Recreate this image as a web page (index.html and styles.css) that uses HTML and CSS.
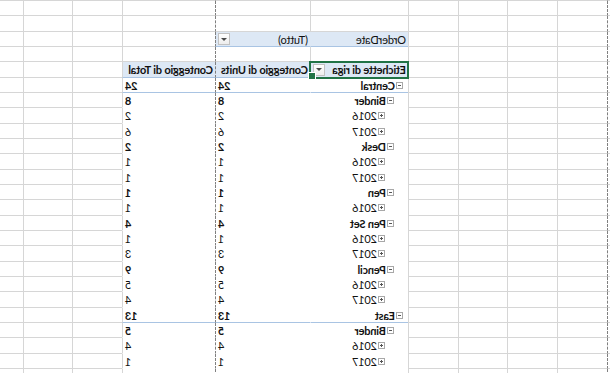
FILE: index.html
```html
<!DOCTYPE html>
<html lang="it">

<head>
    <meta charset="UTF-8">
    <meta name="viewport" content="width=device-width, initial-scale=1.0">
    <title>Tabella pivot - Vendite</title>
    <link rel="stylesheet" href="styles.css">
</head>

<body>
    <div class="sheet">
        <!-- bordo superiore del foglio -->
        <div class="row"><span class="pb"></span><span></span><span></span><span></span><span></span><span></span><span class="pb"></span><span></span><span></span><span></span><span></span></div>
        <div class="row"><span class="pb"></span><span></span><span></span><span></span><span></span><span></span><span class="pb"></span><span></span><span></span><span></span><span></span></div>
        <div class="row"><span class="pb"></span><span></span><span></span><span></span><span></span><span></span><span class="pb"></span><span></span><span></span><span></span><span></span></div>

        <!-- filtro -->
        <div class="row">
            <span class="pb"></span><span></span><span></span><span></span><span></span>
            <span class="flt lbl">OrderDate</span>
            <span class="flt pb">(Tutto)<i class="dd"></i></span>
            <span></span><span></span><span></span><span></span>
        </div>

        <div class="row"><span class="pb"></span><span></span><span></span><span></span><span></span><span></span><span class="pb"></span><span></span><span></span><span></span><span></span></div>

        <!-- intestazione pivot -->
        <div class="row head">
            <span class="pb"></span><span></span><span></span><span></span><span></span>
            <span class="pv lbl sel">Etichette di riga<i class="dd"></i></span>
            <span class="pv pb">Conteggio di Units</span>
            <span class="pv">Conteggio di Total</span>
            <span></span><span></span><span></span>
        </div>

        <div class="row sub"><span class="pb"></span><span></span><span></span><span></span><span></span><span class="pv lbl l1 b"><i class="tg"></i>Central</span><span class="pv pb num b">24</span><span class="pv num b">24</span><span></span><span></span><span></span></div>
        <div class="row"><span class="pb"></span><span></span><span></span><span></span><span></span><span class="pv lbl l2 b"><i class="tg"></i>Binder</span><span class="pv pb num b">8</span><span class="pv num b">8</span><span></span><span></span><span></span></div>
        <div class="row"><span class="pb"></span><span></span><span></span><span></span><span></span><span class="pv lbl l3"><i class="tg plus"></i>2016</span><span class="pv pb num">2</span><span class="pv num">2</span><span></span><span></span><span></span></div>
        <div class="row"><span class="pb"></span><span></span><span></span><span></span><span></span><span class="pv lbl l3"><i class="tg plus"></i>2017</span><span class="pv pb num">6</span><span class="pv num">6</span><span></span><span></span><span></span></div>
        <div class="row"><span class="pb"></span><span></span><span></span><span></span><span></span><span class="pv lbl l2 b"><i class="tg"></i>Desk</span><span class="pv pb num b">2</span><span class="pv num b">2</span><span></span><span></span><span></span></div>
        <div class="row"><span class="pb"></span><span></span><span></span><span></span><span></span><span class="pv lbl l3"><i class="tg plus"></i>2016</span><span class="pv pb num">1</span><span class="pv num">1</span><span></span><span></span><span></span></div>
        <div class="row"><span class="pb"></span><span></span><span></span><span></span><span></span><span class="pv lbl l3"><i class="tg plus"></i>2017</span><span class="pv pb num">1</span><span class="pv num">1</span><span></span><span></span><span></span></div>
        <div class="row"><span class="pb"></span><span></span><span></span><span></span><span></span><span class="pv lbl l2 b"><i class="tg"></i>Pen</span><span class="pv pb num b">1</span><span class="pv num b">1</span><span></span><span></span><span></span></div>
        <div class="row"><span class="pb"></span><span></span><span></span><span></span><span></span><span class="pv lbl l3"><i class="tg plus"></i>2016</span><span class="pv pb num">1</span><span class="pv num">1</span><span></span><span></span><span></span></div>
        <div class="row"><span class="pb"></span><span></span><span></span><span></span><span></span><span class="pv lbl l2 b"><i class="tg"></i>Pen Set</span><span class="pv pb num b">4</span><span class="pv num b">4</span><span></span><span></span><span></span></div>
        <div class="row"><span class="pb"></span><span></span><span></span><span></span><span></span><span class="pv lbl l3"><i class="tg plus"></i>2016</span><span class="pv pb num">1</span><span class="pv num">1</span><span></span><span></span><span></span></div>
        <div class="row"><span class="pb"></span><span></span><span></span><span></span><span></span><span class="pv lbl l3"><i class="tg plus"></i>2017</span><span class="pv pb num">3</span><span class="pv num">3</span><span></span><span></span><span></span></div>
        <div class="row"><span class="pb"></span><span></span><span></span><span></span><span></span><span class="pv lbl l2 b"><i class="tg"></i>Pencil</span><span class="pv pb num b">9</span><span class="pv num b">9</span><span></span><span></span><span></span></div>
        <div class="row"><span class="pb"></span><span></span><span></span><span></span><span></span><span class="pv lbl l3"><i class="tg plus"></i>2016</span><span class="pv pb num">5</span><span class="pv num">5</span><span></span><span></span><span></span></div>
        <div class="row"><span class="pb"></span><span></span><span></span><span></span><span></span><span class="pv lbl l3"><i class="tg plus"></i>2017</span><span class="pv pb num">4</span><span class="pv num">4</span><span></span><span></span><span></span></div>
        <div class="row sub"><span class="pb"></span><span></span><span></span><span></span><span></span><span class="pv lbl l1 b"><i class="tg"></i>East</span><span class="pv pb num b">13</span><span class="pv num b">13</span><span></span><span></span><span></span></div>
        <div class="row"><span class="pb"></span><span></span><span></span><span></span><span></span><span class="pv lbl l2 b"><i class="tg"></i>Binder</span><span class="pv pb num b">5</span><span class="pv num b">5</span><span></span><span></span><span></span></div>
        <div class="row"><span class="pb"></span><span></span><span></span><span></span><span></span><span class="pv lbl l3"><i class="tg plus"></i>2016</span><span class="pv pb num">4</span><span class="pv num">4</span><span></span><span></span><span></span></div>
        <div class="row"><span class="pb"></span><span></span><span></span><span></span><span></span><span class="pv lbl l3"><i class="tg plus"></i>2017</span><span class="pv pb num">1</span><span class="pv num">1</span><span></span><span></span><span></span></div>
        <div class="row"><span class="pb"></span><span></span><span></span><span></span><span></span><span class="pv lbl"></span><span class="pv pb"></span><span class="pv"></span><span></span><span></span><span></span></div>
    </div>
</body>

</html>
```

FILE: styles.css
```css
:root {
    --grid: #d6d6d6;
    --page-break: #808080;
    --pivot-bg: #dde8f5;
    --pivot-line: #a9c4e3;
    --select: #217346;
}

* {
    margin: 0;
    padding: 0;
    box-sizing: border-box;
}

body {
    background: #fff;
    color: #111;
    font-family: Lato, "Liberation Sans", sans-serif;
    font-size: 11px;
    letter-spacing: -0.2px;
    overflow: hidden;
}

/* the sheet is shown flipped left to right */
.sheet {
    width: 610px;
    height: 373px;
    overflow: hidden;
    display: grid;
    grid-template-columns: 3px 50px 50px 49px 50px 98px 95px 93px 50px 49px 23px;
    grid-template-rows: 1px;
    grid-auto-rows: 15.333px;
    transform: scaleX(-1);
}

.row {
    display: contents;
}

.row > span {
    border-right: 1px solid var(--grid);
    border-bottom: 1px solid var(--grid);
    white-space: nowrap;
}

.row > span:last-child {
    border-right: 0;
}

.row > .pb {
    border-right: 1px dashed var(--page-break);
}

/* pivot cells */
.row > .pv,
.row > .flt {
    display: flex;
    align-items: center;
    padding: 1px 2px 0;
    background: #fff;
}

.row > .pv {
    border-bottom-color: transparent;
}

.row > .lbl {
    border-right-color: transparent;
}

.row > .flt {
    background: var(--pivot-bg);
    border-bottom-color: var(--pivot-line);
}

.row.head > .pv {
    background: var(--pivot-bg);
    border-bottom-color: var(--pivot-line);
    font-weight: 700;
}

.row.sub > .pv {
    border-bottom-color: var(--pivot-line);
}

.num {
    justify-content: flex-end;
}

.b {
    font-weight: 700;
}

.l1 {
    padding-left: 5px !important;
}

.l2 {
    padding-left: 14px !important;
}

.l3 {
    padding-left: 23px !important;
}

/* active cell */
.sel {
    position: relative;
    outline: 2px solid var(--select);
    outline-offset: -1px;
}

.sel::after {
    content: '';
    position: absolute;
    right: -3px;
    bottom: -3px;
    width: 6px;
    height: 6px;
    background: var(--select);
    border: 1px solid #fff;
    z-index: 2;
}

/* filter dropdown button */
.dd {
    margin-left: auto;
    width: 12px;
    height: 12px;
    border: 1px solid #c2c2c2;
    background: linear-gradient(#fff, #ededed);
    display: flex;
    align-items: center;
    justify-content: center;
    flex-shrink: 0;
}

.dd::after {
    content: '';
    border-left: 3px solid transparent;
    border-right: 3px solid transparent;
    border-top: 3px solid #4a4a4a;
}

/* expand / collapse toggle */
.tg {
    position: relative;
    width: 7px;
    height: 7px;
    margin-right: 1px;
    border: 1px solid #a8a8a8;
    background: #fff;
    flex-shrink: 0;
}

.tg::before {
    content: '';
    position: absolute;
    left: 1px;
    top: 2px;
    width: 3px;
    height: 1px;
    background: #555;
}

.tg.plus::after {
    content: '';
    position: absolute;
    left: 2px;
    top: 1px;
    width: 1px;
    height: 3px;
    background: #555;
}
```
